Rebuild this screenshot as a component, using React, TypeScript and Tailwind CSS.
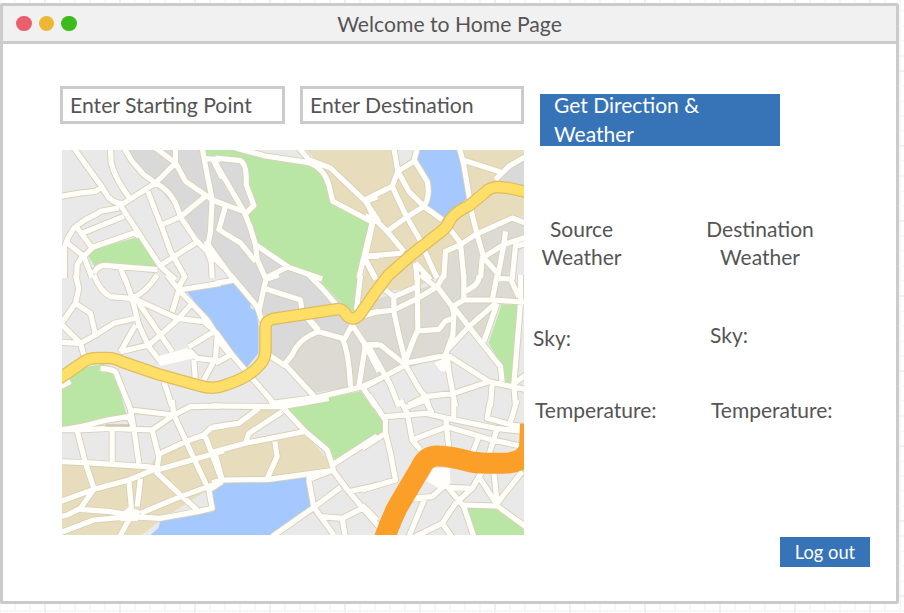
import React from "react";

type Tile = { x: number; y: number; roads: string };

// Street network, split into survey tiles drawn at three times map scale.
const tiles: Tile[] = [
  {
    x: 60,
    y: 148,
    roads:
      "M40 0L125 118L145 150L180 172L300 355L345 395M0 145L60 135L105 130L125 118M150 0L152 45Q165 95 207 150M190 0L215 40L250 80L285 105L175 175M145 148Q165 170 190 165M285 105L345 45L345 0M285 0L345 45L375 100L455 155L490 170M425 0L440 80L455 155L450 250L440 305M430 32L480 35M455 30L485 90M285 105Q325 125 345 165L362 210L405 275L440 310L490 358M262 130L285 190L305 240L330 310L375 390M305 230L362 205L435 145M300 352L405 285M175 180L120 190L110 197L75 215L40 240L25 265L12 295L12 390M62 257L190 205M90 300L220 255L235 265M50 240L95 300L70 325M20 285L70 325L95 390M65 325L50 350L48 400M100 375Q110 355 130 352L290 365M180 360L195 400M440 310L452 340L455 390",
  },
  {
    x: 215,
    y: 148,
    roads:
      "M60 0L150 24L280 44Q325 60 340 110L352 160L470 222M250 0L280 35L345 60L450 160L490 220M450 160L485 147M0 30L75 38Q95 50 92 110L115 172L88 200M0 45L85 190M0 160L85 190L105 240L120 290L220 358L320 393M30 175L10 245L75 285L120 340M120 290L125 335L150 390M-30 280L50 390M150 390L220 355M472 215L430 390M455 325L490 325M450 335L480 395",
  },
  {
    x: 365,
    y: 148,
    roads:
      "M85 0L97 70L80 115L0 155M155 0L145 40L97 70M145 35L185 100Q195 145 175 175M97 70L130 130L175 175L230 215M80 115L120 200L160 270L205 370L215 390M175 175L120 210L65 250M0 155L25 210L65 250L115 310M0 325L115 315M25 210L0 325M0 335L30 390M0 205L25 210M282 0L295 50L320 200L335 260L355 330L400 380M290 35L405 72M390 95L430 55L487 22M235 220L285 285L295 390M285 290L330 260L440 210L487 228M285 290L240 310L235 390M420 250L415 290L487 265M415 290L350 330L345 390M415 290L395 395M487 285L450 295L440 395M150 345L155 395M150 345L195 395",
  },
  {
    x: 60,
    y: 275,
    roads:
      "M45 0L55 40L45 85L6 140M100 0Q120 50 150 65L210 70M190 0L215 70L235 150L265 215L300 260M290 0Q260 50 215 70M45 85L90 115L105 180M0 145L60 205L105 180L160 145L225 130M0 202L60 205L70 240M225 150L180 230M180 230L265 210L300 180L350 135L395 85M235 85L300 180L335 230M215 75L240 80L350 130L430 140L460 165M320 0L355 45L480 25M355 45L335 110M355 45L440 135L485 205M375 0L350 45M460 170L385 215M385 225L410 250L480 258M400 255L405 320M470 180L465 250L430 315M120 280Q150 282 165 290L205 390M310 320L335 395M0 335L30 320",
  },
  {
    x: 215,
    y: 275,
    roads:
      "M0 25L60 15M45 0L125 95L140 140M155 0L145 40L130 110M145 15L190 0M145 40L255 75L260 110L310 165M280 0L320 40L380 110M435 0L423 105M490 108L435 125M310 170Q250 190 230 240L205 270L160 240M275 130L310 170L380 190Q400 230 405 335M410 150L385 195M410 150L450 210L430 335M450 210L490 208M450 210L490 290M205 265L300 368M170 385L300 368L440 335L490 312M0 170L50 240L110 310L180 390M0 265L45 240M0 205L10 200L45 240M440 335L480 395",
  },
  {
    x: 365,
    y: 275,
    roads:
      "M60 45L85 65L155 35M155 0L157 165Q140 200 120 260M85 65L85 110L100 180L120 260M0 115L85 105L157 70L215 35M165 0L210 35M235 0L215 35L260 95M295 0L295 75L260 95L265 120L262 180L240 240M340 0Q345 30 295 50M395 0L380 75L487 82M295 75L380 75M395 10L435 12L460 65M260 90L310 155L390 85M310 155L405 275L410 320M310 155L245 225M395 85L355 200M157 168L220 163L240 138L262 130M120 265L245 240L370 320L440 335L487 345M-10 210L45 210L120 270L-10 340M10 215L75 330L100 395M120 270L160 340L180 365L265 355L370 320M130 390L180 365L190 395M245 240L250 290L270 395M465 0L465 85L445 330L450 395M440 330L487 295M380 325L375 395",
  },
  {
    x: 60,
    y: 400,
    roads:
      "M0 90L60 80L140 60L205 50L220 85M200 0L210 30L220 85L235 190M0 88L50 90L150 85L275 90M210 30L340 45M335 0L340 45L375 120L400 175L445 270M340 45L390 20L480 18M340 45L275 90L295 170L290 205M50 92L75 190L100 265M0 185L75 188L260 200L290 205M155 90L155 185M290 165L375 125L430 105L450 85L490 77M290 210L490 152M435 110L450 150L485 245M290 205L205 240L100 268L0 305M100 268L60 325L20 345L0 350M60 328L150 335L210 345M205 240L215 350M240 235L230 320M285 215L360 285L410 330M485 245L360 290L240 340M0 398L100 360L210 350L300 355L410 335L455 325L445 270L485 245M210 350L175 415",
  },
  {
    x: 215,
    y: 400,
    roads:
      "M-10 18L200 20L340 -5M165 0L175 18M200 20L270 95L335 150L350 195M-10 248L20 240L160 238L350 212M-10 82L70 70L130 25M200 35L100 100L90 130M-10 157L90 130L265 95M0 165L20 240M178 125L185 170L155 235M350 195L485 108M350 195L355 215L400 275L490 380M400 275L490 255M375 262L295 322L170 410M280 240L295 322L355 405M275 240L340 215M320 350L380 355L440 325M380 355L390 415",
  },
  {
    x: 365,
    y: 400,
    roads:
      "M10 -15L60 60L60 100L-10 145M60 50L180 40L245 55L390 85L480 95M105 0L125 40L140 120L165 150M60 100L75 160L90 240L-10 270M180 0L200 40M115 25L180 0M265 0L265 55M375 0L365 55L440 75L480 80M455 0L435 65M240 50L250 145M140 120L245 80L380 120L477 140M395 85L370 165M340 110L320 160M-10 315L35 360M125 295L200 290L245 250M180 290L130 410M245 262L320 265L350 215M245 260L295 320L325 410M270 310L320 265L340 230L395 315M295 315L395 318L487 385M385 215L395 310L470 215M270 310L230 370L150 410M230 370L260 412",
  },
];

const route =
  "M58 379L80 364Q87 358 96 358L108 358Q114 358 122 362L157 374L200 386Q213 390 225 385Q250 377 260 364Q265 359 265 349L265 327Q265 321 272 319L338 309Q342 309 346 315Q352 322 359 315L375 292L388 275L412 254L440 232Q446 228 449 221Q454 212 468 206L484 193Q489 187 498 187L508 188L526 192";

const motorway =
  "M382 544Q389 523 397 507L420 468Q426 455 438 456Q449 456 471 462Q485 464 508 463Q517 462 524 457L529 449L530 424";

function Streets({ className, width }: { className: string; width: number }) {
  return (
    <g fill="none" className={className} strokeWidth={width} strokeLinejoin="round">
      {tiles.map((t) => (
        <path key={`${t.x}-${t.y}`} d={t.roads} transform={`translate(${t.x} ${t.y}) scale(.33333)`} />
      ))}
    </g>
  );
}

function CityMap() {
  return (
    <svg viewBox="61.5 150 462 385" className="block h-[385px] w-[462px]" aria-label="City map">
      <rect x="61" y="149" width="464" height="388" fill="#e9e9e9" />
      <path fill="#d9d9d9" d="M122 149H205L245 158L250 220L258 247L320 275L350 310L345 337L318 333L297 345L287 363L270 355L268 320L257 307L232 277L205 246L180 215L155 183Z" />
      <path fill="#e7ddbd" d="M305 149H525V215L475 235L460 245L440 275L410 290L385 290L360 300L372 222L332 200L320 165Z" />
      <path fill="#d9d9d9" d="M498 180L510 166L525 157V186Z" />
      <path fill="#e9e9e9" d="M396 149H415L410 160L398 170Z" />
      <path fill="#ddd9d3" d="M525 217L510 220L475 233L458 245L445 262V280L420 289L395 293L375 300L352 325L343 337L318 333L298 343L287 363L312 393L355 386L440 357L448 350L468 330L483 345L499 305H525Z" />
      <path fill="#e9e9e9" d="M525 245L512 258L508 275L515 300H525Z" />
      <path fill="#e7ddbd" d="M61 463L147 467L160 453L203 437L215 430L240 424L262 408H280L250 433L248 443L303 432L332 465L330 471L220 482L160 520L140 536H61Z" />
      <g fill="#bae6a5">
        <path transform="translate(215 148) scale(.33333)" d="M-55 0H60L150 22L280 50Q330 70 340 110L350 160L468 225L423 460L417 495L395 480L300 385L220 355L130 295L95 210L122 172L95 110L92 60L75 38L-20 28Z" />
        <path d="M61 385L85 367L103 364L115 375L126 415L85 423L61 427Z" />
        <path d="M88 256L97 248L138 237L157 267L120 265L95 268Z" />
        <path d="M284 407L300 404L360 391L383 423V433L336 461L326 450Z" />
        <path d="M501 305H518L510 385L503 382L502 367L488 343Z" />
        <path d="M464 506H497L525 530V536H474Z" />
        <path d="M518 473L525 467V478Z" />
      </g>
      <g fill="#a5c8ff">
        <path d="M420 149H457L467 198L455 208L443 220L427 208Q432 191 425 178L417 160Z" />
        <path d="M185 290L233 282L250 302V308L256 311L258 328V353L246 368Z" />
        <path d="M224 483L210 490L212 508L197 513L160 520L158 528L149 536H272L312 507L305 476L268 480Z" />
      </g>
      <Streets className="stroke-[#d8d0b6]" width={21} />
      <Streets className="stroke-[#fffefb]" width={15.5} />
      <g fill="#fffefb">
        <path d="M155 357L187 348L194 358L160 366ZM125 298L134 294L140 299L134 306ZM434 363L448 356L450 372L440 371ZM118 516L128 507L140 511L137 521L120 521ZM426 481L433 468L449 468L450 484L441 490Z" />
      </g>
      {/* Small service yard beside the western park */}
      <path d="M105 425.500H129" stroke="#cfc6ae" strokeWidth="2.500" />
      <g fill="none" strokeLinejoin="round">
        <path d={route} stroke="#dfbd5c" strokeWidth="12.500" />
        <path d={route} stroke="#ffdf67" strokeWidth="10" />
        <path d={motorway} stroke="#fb9f28" strokeWidth="21" />
      </g>
    </svg>
  );
}

function Place({ name, className }: { name: string; className: string }) {
  return <div className={`w-[130px] text-center leading-[28px] ${className}`}>{name}<br />Weather</div>;
}

export default function App() {
  return (
    <div className="h-[613px] w-[904px] overflow-hidden bg-white bg-[linear-gradient(90deg,#f0f0f0_2px,transparent_2px),linear-gradient(#f0f0f0_2px,transparent_2px),linear-gradient(90deg,#f7f7f7_2px,transparent_2px),linear-gradient(#f7f7f7_2px,transparent_2px)] bg-[size:75px_75px,75px_75px,15px_15px,15px_15px] bg-[position:44px_0,0_70px,14px_0,0_10px] pt-[3px] font-[Lato,'Liberation_Sans',sans-serif] text-[21px] text-[#555]">
      <main className="flex h-[601px] w-[899px] flex-col rounded-xs border-[3px] border-[#cbcbcb] bg-white">
        <header className="grid h-[38px] shrink-0 grid-cols-[1fr_auto_1fr] items-center border-b-[3px] border-[#cbcbcb] bg-[#f1f1f1]">
          <div className="flex gap-[7px] pl-[13px]">
            <i className="size-[15.500px] rounded-full bg-[#eb5e6b]" />
            <i className="size-[15.500px] rounded-full bg-[#edb634]" />
            <i className="size-[15.500px] rounded-full bg-[#3dbb1c]" />
          </div>
          <h1 className="text-[21.200px] leading-[30px] whitespace-nowrap">Welcome to Home Page</h1>
        </header>
        <div className="flex min-h-0 flex-1">
          <section className="ml-[57px] w-[464px] shrink-0 pt-[42px]">
            <div className="flex gap-[15px] text-[21.200px]">
              <div className="h-[38px] w-[225px] border-[3px] border-[#cbcbcb] px-[7px] leading-[32px] whitespace-nowrap">Enter Starting Point</div>
              <div className="h-[38px] w-[224px] border-[3px] border-[#cbcbcb] px-[7px] leading-[32px] whitespace-nowrap">Enter Destination</div>
            </div>
            <div className="mt-[26px] ml-[1.500px]"><CityMap /></div>
          </section>
          <aside className="flex flex-1 flex-col pl-[6px]">
            <button className="mt-[50px] ml-[10px] h-[52px] w-[240px] bg-[#3673b7] pl-[14px] text-left leading-[29px] text-white"><span className="-mt-[4px] block">Get Direction &amp;<br />Weather</span></button>
            <div className="mt-[69px] flex">
              <Place name="Source" className="-ml-[13.500px]" />
              <Place name="Destination" className="ml-[48.500px]" />
            </div>
            <div className="mt-[50px] flex leading-[28px]"><span className="w-[180px] pt-[3px] pl-[3px]">Sky:</span><span>Sky:</span></div>
            <div className="mt-[44px] flex leading-[28px]"><span className="w-[176px] pl-[5px]">Temperature:</span><span className="pl-[5px]">Temperature:</span></div>
            <button className="mt-[113px] ml-[250px] h-[30px] w-[90px] bg-[#3673b7] text-[18.300px] leading-[30px] text-white">Log out</button>
          </aside>
        </div>
      </main>
    </div>
  );
}
